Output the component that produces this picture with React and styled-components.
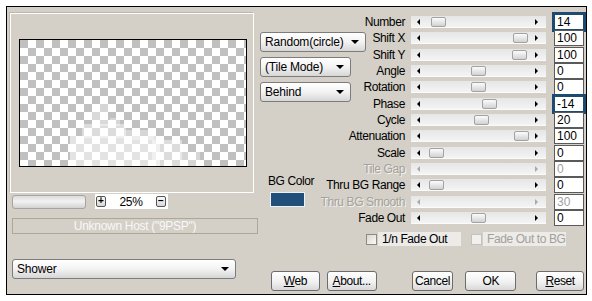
import React from 'react';
import styled, { createGlobalStyle } from 'styled-components';

const params = [
  { label: 'Number', value: '14', thumb: 20, focus: true },
  { label: 'Shift X', value: '100', thumb: 102 },
  { label: 'Shift Y', value: '100', thumb: 101 },
  { label: 'Angle', value: '0', thumb: 60 },
  { label: 'Rotation', value: '0', thumb: 60 },
  { label: 'Phase', value: '-14', thumb: 71, focus: true },
  { label: 'Cycle', value: '20', thumb: 63 },
  { label: 'Attenuation', value: '100', thumb: 103 },
  { label: 'Scale', value: '0', thumb: 18 },
  { label: 'Tile Gap', value: '0', disabled: true },
  { label: 'Thru BG Range', value: '0', thumb: 18 },
  { label: 'Thru BG Smooth', value: '30', disabled: true },
  { label: 'Fade Out', value: '0', thumb: 60 },
];

function App() {
  return (
    <Page>
      <GlobalStyle />
      <Window>
        <LeftCol>
          <GroupBox>
            <Preview>
              <svg width="226" height="126" viewBox="0 0 226 126">
                <g fill="#fff">
                  <rect x="50" y="96" width="90" height="30" opacity="0.55" />
                  <rect x="62" y="84" width="44" height="14" opacity="0.45" />
                  <rect x="72" y="72" width="16" height="14" opacity="0.4" />
                  <rect x="80" y="64" width="8" height="8" opacity="0.35" />
                  <rect x="104" y="90" width="30" height="10" opacity="0.35" />
                  <rect x="132" y="100" width="30" height="26" opacity="0.45" />
                  <rect x="160" y="112" width="20" height="14" opacity="0.35" />
                  <rect x="90" y="78" width="10" height="8" opacity="0.35" />
                </g>
              </svg>
            </Preview>
          </GroupBox>
          <ZoomRow>
            <ZoomBar />
            <ZoomBox>
              <TinyButton>+</TinyButton>
              <ZoomValue>25%</ZoomValue>
              <TinyButton>−</TinyButton>
            </ZoomBox>
          </ZoomRow>
          <HostBox>Unknown Host ("9PSP")</HostBox>
          <Select $w={224} $top={25} $left={2}>Shower</Select>
        </LeftCol>

        <RightCol>
          <TopArea>
            <MidCol>
              <Select $w={106} $top={18}>Random(circle)</Select>
              <Select $w={91} $top={5}>(Tile Mode)</Select>
              <Select $w={91} $top={5}>Behind</Select>
              <BgBlock>
                <BgLabel>BG Color</BgLabel>
                <Swatch />
              </BgBlock>
            </MidCol>
            <ParamGrid>
              {params.map((p) => (
                <React.Fragment key={p.label}>
                  <Label $disabled={p.disabled}>{p.label}</Label>
                  <TrackCell>
                    <Track $disabled={p.disabled}>
                      {p.thumb != null && <Thumb style={{ left: p.thumb }} />}
                    </Track>
                  </TrackCell>
                  <ValueCell>
                    <ValueBox $focus={p.focus} $disabled={p.disabled}>{p.value}</ValueBox>
                  </ValueCell>
                </React.Fragment>
              ))}
            </ParamGrid>
          </TopArea>

          <CheckRow>
            <CheckItem>
              <CheckBox />
              <CheckText>1/n Fade Out</CheckText>
            </CheckItem>
            <CheckItem>
              <CheckBox $disabled />
              <CheckText $disabled>Fade Out to BG</CheckText>
            </CheckItem>
          </CheckRow>

          <ButtonRow>
            <Button $w={49} $gap={11}><u>W</u>eb</Button>
            <Button $w={50} $gap={7}><u>A</u>bout...</Button>
            <Button $w={42} $gap={35}>Cancel</Button>
            <Button $w={51} $gap={12}>OK</Button>
            <Button $w={48} $gap={20}><u>R</u>eset</Button>
          </ButtonRow>
        </RightCol>
      </Window>
    </Page>
  );
}

export default App;

const GlobalStyle = createGlobalStyle`
  html, body {
    margin: 0;
    padding: 0;
    background: #fff;
  }
  body {
    font-family: "Liberation Sans", Arial, sans-serif;
    font-size: 11px;
    color: #000;
  }
`;

const Page = styled.div`
  width: 592px;
  height: 301px;
  padding: 6px;
  box-sizing: border-box;
`;

const Window = styled.div`
  width: 581px;
  height: 289px;
  box-sizing: border-box;
  border: 1px solid #000;
  background: #d4d0c8;
  display: flex;
  padding: 5px 0 0 3px;
`;

const LeftCol = styled.div`
  width: 248px;
  display: flex;
  flex-direction: column;
`;

const GroupBox = styled.div`
  margin-top: 1px;
  width: 244px;
  height: 180px;
  box-sizing: border-box;
  border: 1px solid #fff;
  box-shadow: -1px -1px 0 #bbb7ae;
  padding: 25px 0 0 8px;
`;

const Preview = styled.div`
  width: 228px;
  height: 128px;
  box-sizing: border-box;
  border: 1px solid #000;
  background: repeating-conic-gradient(#fff 0 25%, #c0c0c0 0 50%) 0 0 / 16px 16px;
  svg {
    display: block;
  }
`;

const ZoomRow = styled.div`
  margin-top: 1px;
  height: 15px;
  padding-left: 2px;
  display: flex;
  align-items: center;
`;

const ZoomBar = styled.div`
  width: 74px;
  height: 14px;
  box-sizing: border-box;
  border: 1px solid #a4a4a4;
  border-radius: 3px;
  background: linear-gradient(#dcdcdc, #f2f2f2 45%, #d2d2d2);
`;

const ZoomBox = styled.div`
  margin-left: 9px;
  width: 73px;
  height: 15px;
  background: #fff;
  display: flex;
  align-items: center;
  padding-left: 1px;
  box-sizing: border-box;
`;

const TinyButton = styled.div`
  width: 10px;
  height: 11px;
  box-sizing: border-box;
  border: 1px solid #555;
  border-radius: 2px;
  background: linear-gradient(#fafafa, #d8d8d8);
  font-size: 10px;
  font-weight: bold;
  line-height: 8px;
  text-align: center;
`;

const ZoomValue = styled.span`
  width: 50px;
  text-align: center;
  font-size: 12px;
  letter-spacing: -0.3px;
`;

const HostBox = styled.div`
  margin: 9px 0 0 2px;
  width: 246px;
  height: 16px;
  box-sizing: border-box;
  border: 1px solid #aca899;
  color: #f8f8f6;
  font-size: 12px;
  letter-spacing: -0.3px;
  line-height: 14px;
  text-align: center;
`;

const Select = styled.div`
  position: relative;
  margin-top: ${(p) => p.$top}px;
  margin-left: ${(p) => p.$left || 0}px;
  width: ${(p) => p.$w}px;
  height: 20px;
  box-sizing: border-box;
  border: 1px solid #7c7c7c;
  border-radius: 3px;
  background: linear-gradient(#fff, #f3f3f3 50%, #d6d6d6);
  font-size: 12px;
  letter-spacing: -0.2px;
  line-height: 18px;
  padding-left: 4px;
  white-space: nowrap;
  &::after {
    content: '';
    position: absolute;
    right: 6px;
    top: 7px;
    border-left: 4px solid transparent;
    border-right: 4px solid transparent;
    border-top: 4px solid #000;
  }
`;

const RightCol = styled.div`
  width: 324px;
  display: flex;
  flex-direction: column;
  margin-left: 2px;
`;

const TopArea = styled.div`
  display: flex;
  margin-top: 2px;
`;

const MidCol = styled.div`
  width: 106px;
  display: flex;
  flex-direction: column;
`;

const BgBlock = styled.div`
  margin: 72px 0 0 8px;
  width: 42px;
  display: flex;
  flex-direction: column;
`;

const BgLabel = styled.div`
  font-size: 12px;
  letter-spacing: -0.4px;
  line-height: 15px;
  white-space: nowrap;
`;

const Swatch = styled.div`
  margin: 3px 0 0 2px;
  width: 35px;
  height: 15px;
  box-sizing: border-box;
  border: 1px solid #eef2f6;
  background: #1f4f7a;
`;

const ParamGrid = styled.div`
  display: grid;
  grid-template-columns: 45px 143px 30px;
  grid-auto-rows: 16.33px;
`;

const Label = styled.div`
  display: flex;
  justify-content: flex-end;
  align-items: center;
  padding-right: 6px;
  white-space: nowrap;
  font-size: 12px;
  letter-spacing: -0.4px;
  color: ${(p) => (p.$disabled ? '#a3a19b' : '#000')};
  text-shadow: ${(p) => (p.$disabled ? '1px 1px 0 #f4f2ee' : 'none')};
`;

const TrackCell = styled.div`
  display: flex;
  align-items: center;
`;

const Track = styled.div`
  position: relative;
  width: 135px;
  height: 12px;
  background: linear-gradient(#e6e6e6, #f4f4f4);
  border-bottom: 1px solid #fbfbfb;
  box-sizing: border-box;
  &::before,
  &::after {
    content: '';
    position: absolute;
    top: 3px;
    border-top: 3px solid transparent;
    border-bottom: 3px solid transparent;
  }
  &::before {
    left: 6px;
    border-right: 3px solid ${(p) => (p.$disabled ? '#a8a8a8' : '#000')};
  }
  &::after {
    right: 8px;
    border-left: 3px solid ${(p) => (p.$disabled ? '#a8a8a8' : '#000')};
  }
`;

const Thumb = styled.div`
  position: absolute;
  top: 1px;
  width: 15px;
  height: 10px;
  box-sizing: border-box;
  border: 1px solid #a2a2a2;
  border-radius: 2px;
  background: linear-gradient(#fcfcfc, #d2d2d2);
`;

const ValueCell = styled.div`
  display: flex;
  align-items: center;
`;

const ValueBox = styled.div`
  width: 30px;
  height: 16px;
  box-sizing: border-box;
  background: #fff;
  border: 1px solid ${(p) => (p.$focus ? '#1d4a70' : '#5a5a5a')};
  outline: ${(p) => (p.$focus ? '2px solid #1d4a70' : 'none')};
  padding-left: 2px;
  font-size: 12px;
  line-height: 14px;
  color: ${(p) => (p.$disabled ? '#a0a0a0' : '#000')};
`;

const CheckRow = styled.div`
  margin-top: 6px;
  padding-left: 106px;
  display: flex;
  gap: 10px;
`;

const CheckItem = styled.div`
  width: 95px;
  height: 14px;
  display: flex;
  align-items: center;
`;

const CheckBox = styled.div`
  width: 11px;
  height: 11px;
  box-sizing: border-box;
  border: 1px solid ${(p) => (p.$disabled ? '#c4c2bc' : '#8a8a86')};
  background: ${(p) => (p.$disabled ? '#f1f0ec' : 'linear-gradient(135deg, #d8d6ce, #fbfbf9)')};
`;

const CheckText = styled.div`
  flex: 1;
  height: 14px;
  margin-left: 1px;
  padding-left: 4px;
  background: #ecebe7;
  font-size: 12px;
  line-height: 14px;
  letter-spacing: -0.4px;
  white-space: nowrap;
  overflow: hidden;
  color: ${(p) => (p.$disabled ? '#a3a19b' : '#000')};
`;

const ButtonRow = styled.div`
  margin-top: 25px;
  display: flex;
`;

const Button = styled.div`
  margin-left: ${(p) => p.$gap}px;
  width: ${(p) => p.$w}px;
  height: 20px;
  box-sizing: border-box;
  border: 1px solid #6c6c6c;
  border-radius: 3px;
  background: linear-gradient(#fff, #f1f1f1 55%, #d8d8d8);
  font-size: 12px;
  letter-spacing: -0.4px;
  line-height: 18px;
  text-align: center;
  white-space: nowrap;
  u {
    text-decoration: underline;
  }
`;
